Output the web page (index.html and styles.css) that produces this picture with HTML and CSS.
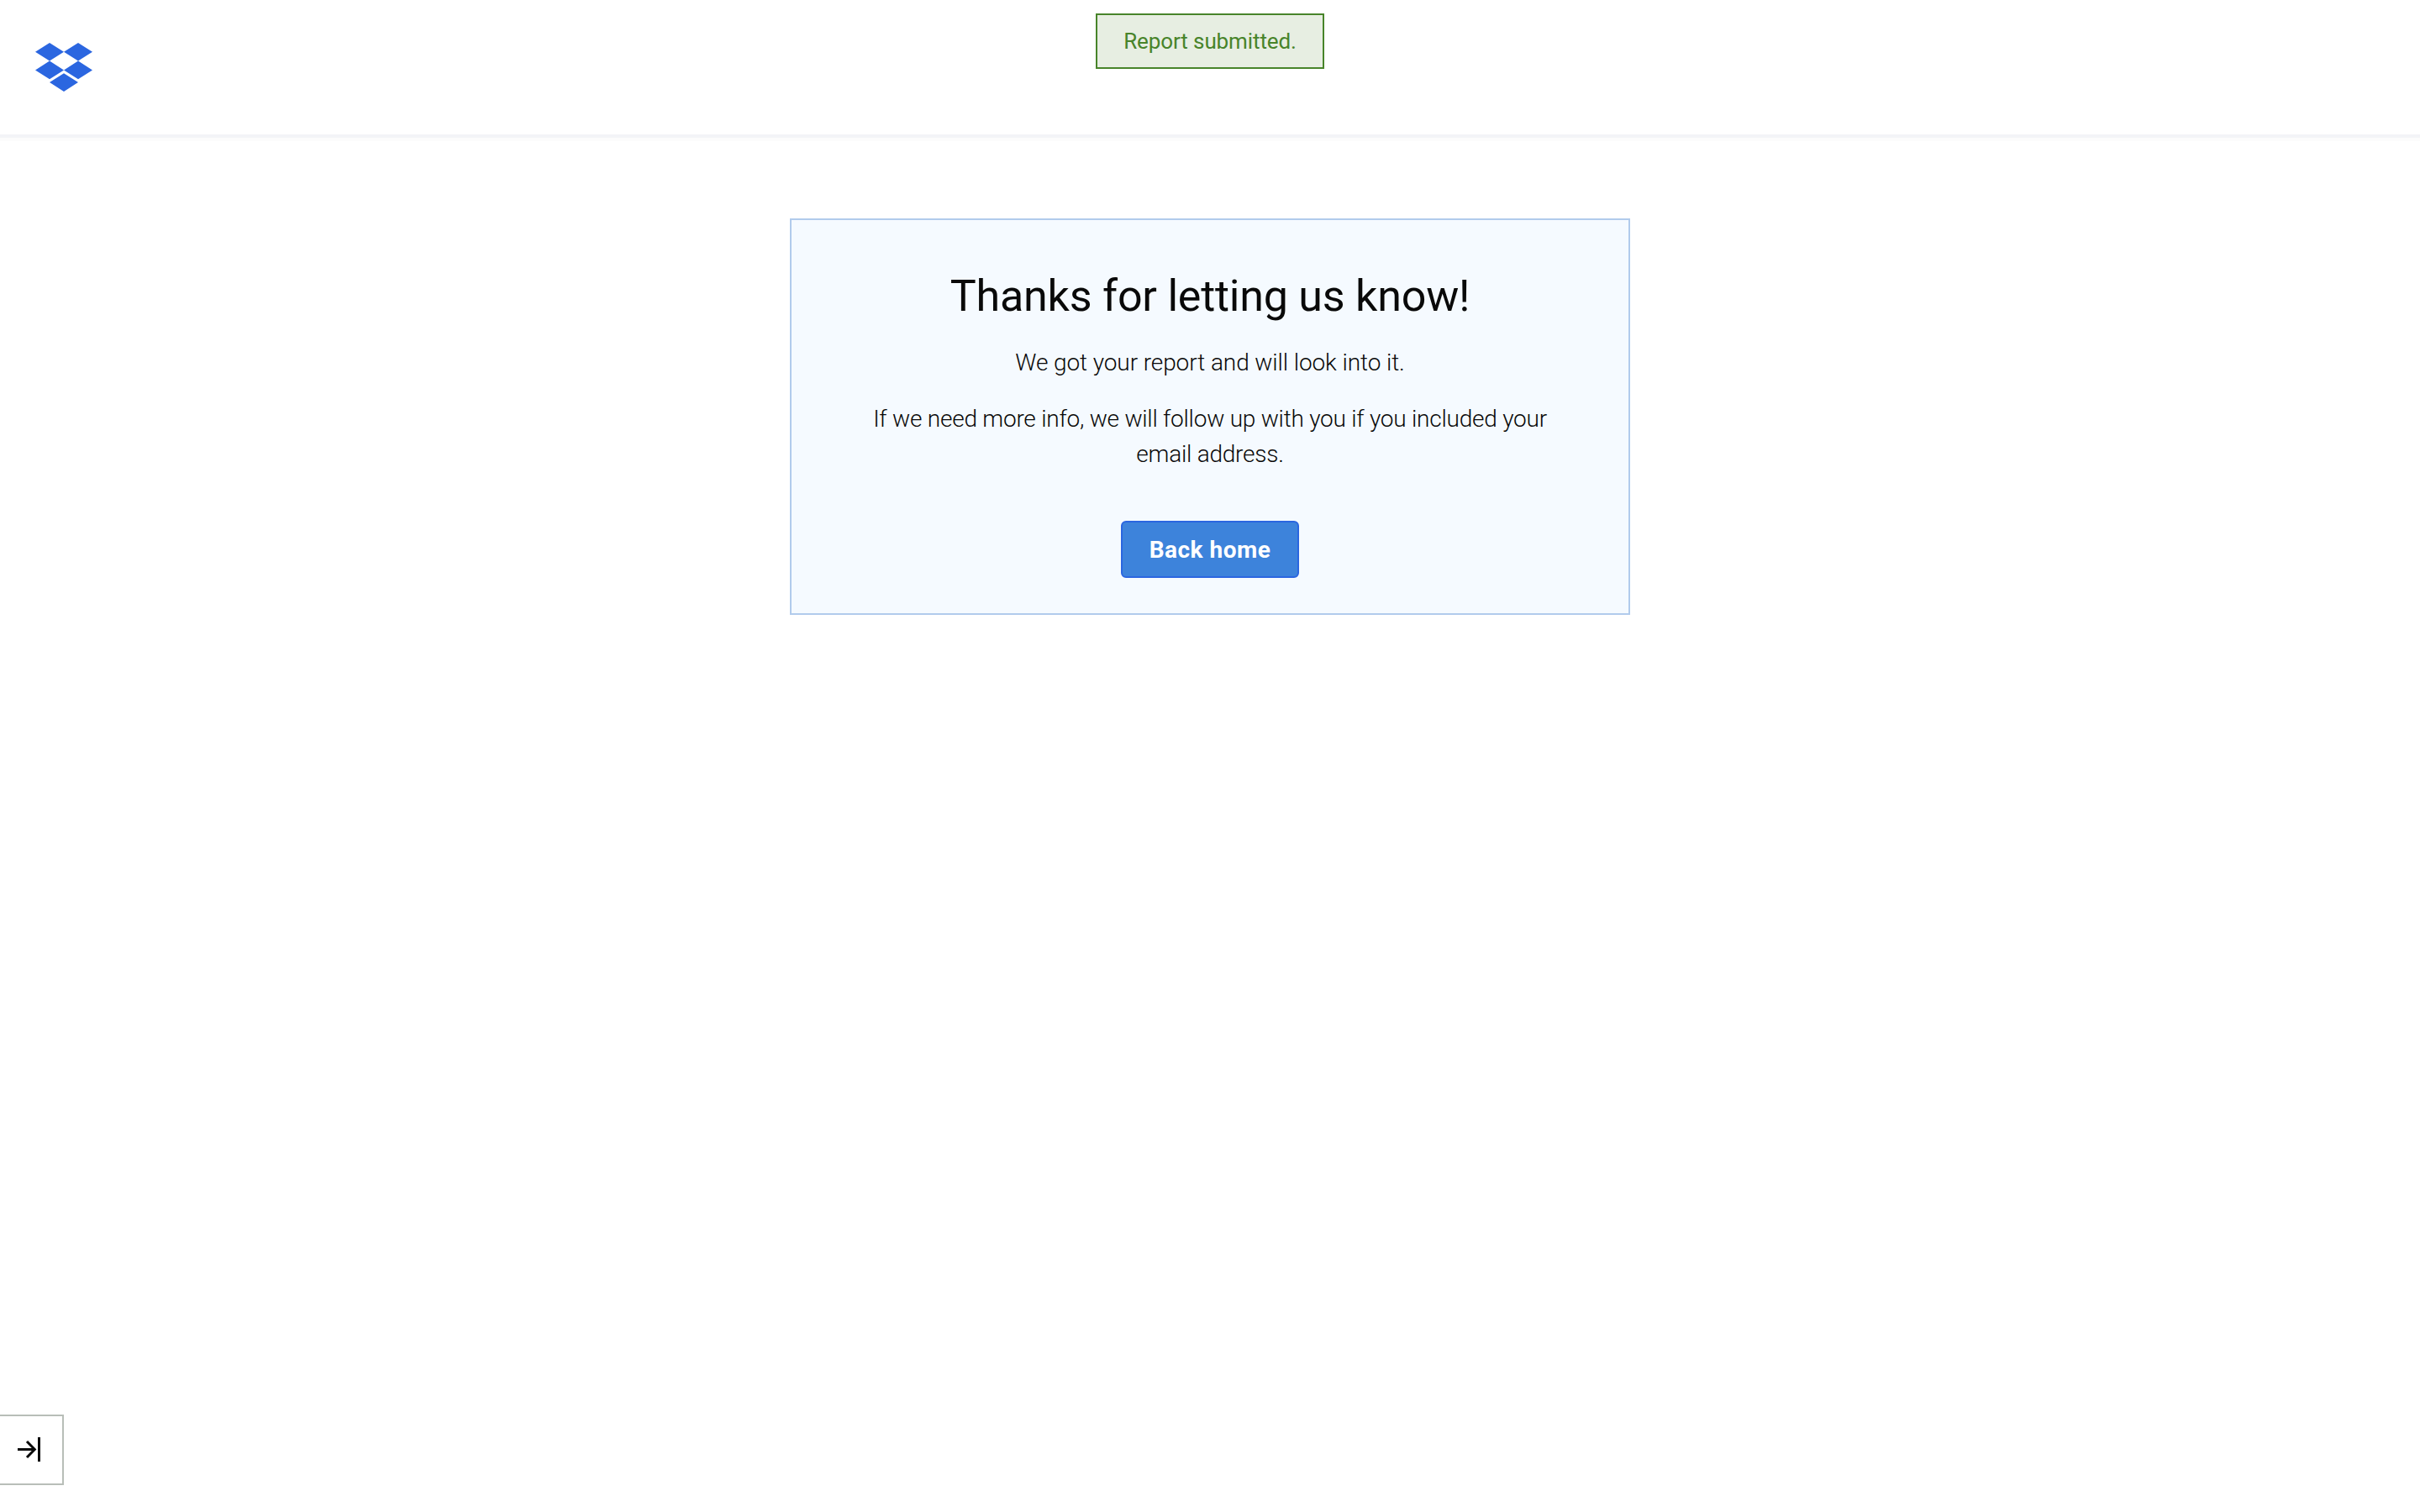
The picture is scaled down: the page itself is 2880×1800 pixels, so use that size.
FILE: index.html
```html
<!DOCTYPE html>
<html lang="en">
<head>
<meta charset="utf-8">
<title>Report submitted</title>
<link rel="stylesheet" href="styles.css">
</head>
<body>
<header class="header">
  <svg class="logo" viewBox="0 0 68 58" role="img" aria-label="Dropbox">
    <path d="M17 0L34 10.8 17 21.6 0 10.8zM51 0L68 10.8 51 21.6 34 10.8zM17 21.6L34 32.4 17 43.2 0 32.4zM51 21.6L68 32.4 51 43.2 34 32.4zM34 36.3L51 47.1 34 57.9 17 47.1z"/>
  </svg>
</header>
<div class="toast"><span class="toast-text">Report submitted.</span></div>
<main class="main">
  <section class="card">
    <h1 class="title"><span class="title-text">Thanks for letting us know!</span></h1>
    <p class="text text-first">We got your report and will look into it.</p>
    <p class="text text-second">If we need more info, we will follow up with you if you included your<br>email address.</p>
    <a class="button"><span class="button-text">Back home</span></a>
  </section>
</main>
<button class="expand" aria-label="Expand">
  <svg class="expand-icon" viewBox="0 0 28 30">
    <path d="M0 14.5H20M11 5L20.3 14.5 11 24M25.5 0V29"/>
  </svg>
</button>
</body>
</html>
```
FILE: styles.css
```css
* { box-sizing: border-box; }
body {
  margin: 0;
  height: 1800px;
  overflow: hidden;
  background: #fff;
  color: #090909;
  font-family: Roboto, "Liberation Sans", sans-serif;
}
.header {
  height: 160px;
  padding: 51px 42px;
  box-shadow: 0 4px 0 #f3f4f7, 0 8px 0 #fcfcfc;
}
.logo { display: block; width: 68px; height: 58px; fill: #2b66e0; }
.toast {
  position: absolute;
  top: 16px;
  left: 1304px;
  width: 272px;
  height: 66px;
  border: 2px solid #48842a;
  background: #e7eee2;
  color: #48842a;
  font-size: 26px;
  line-height: 62px;
  text-align: center;
  white-space: nowrap;
}
.toast-text { letter-spacing: -0.1px; }
.main { display: flex; justify-content: center; padding-top: 100px; }
.card {
  width: 1000px;
  height: 472px;
  border: 2px solid #b1cbec;
  background: #f5faff;
  display: flex;
  flex-direction: column;
  align-items: center;
  padding-top: 61px;
}
.title {
  margin: 0;
  font-size: 52px;
  font-weight: 400;
  line-height: 60px;
  letter-spacing: -0.22px;
  white-space: nowrap;
}
.text {
  margin: 0;
  font-size: 28px;
  font-weight: 300;
  line-height: 42px;
  text-align: center;
  white-space: nowrap;
}
.text-first { margin-top: 28px; letter-spacing: -0.09px; }
.text-second { margin-top: 25px; letter-spacing: -0.23px; }
.button {
  width: 212px;
  height: 68px;
  margin-top: 58px;
  border: 2px solid #2b66e0;
  border-radius: 6px;
  background: #3d83db;
  color: #fff;
  font-size: 28px;
  font-weight: 700;
  letter-spacing: 0.5px;
  line-height: 66px;
  text-align: center;
  white-space: nowrap;
}
.expand {
  position: absolute;
  left: 0;
  top: 1684px;
  width: 76px;
  height: 84px;
  padding: 25px 0 0 21px;
  border: 2px solid #b8beb8;
  border-left: 0;
  background: #fff;
  display: flex;
  align-items: flex-start;
}
.expand-icon {
  display: block;
  width: 28px;
  height: 30px;
  fill: none;
  stroke: #090909;
  stroke-width: 3;
}
```
